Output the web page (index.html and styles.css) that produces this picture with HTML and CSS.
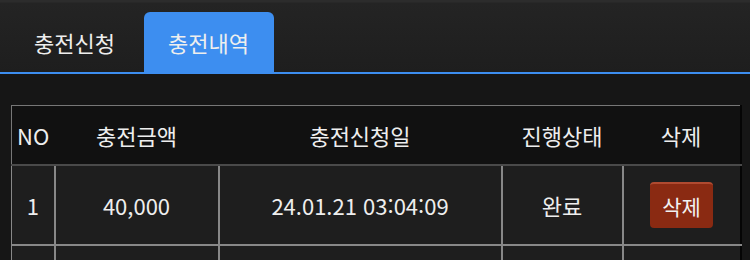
FILE: index.html
```html
<!DOCTYPE html>
<html lang="ko">
<head>
<meta charset="utf-8">
<link rel="stylesheet" href="styles.css">
</head>
<body>
<div class="tabs">
  <div class="tab">충전신청</div>
  <div class="tab active">충전내역</div>
</div>
<div class="content">
  <table class="list">
    <colgroup>
      <col class="c-no"><col class="c-amt"><col class="c-date"><col class="c-state"><col class="c-del">
    </colgroup>
    <thead>
      <tr><th>NO</th><th>충전금액</th><th>충전신청일</th><th>진행상태</th><th>삭제</th></tr>
    </thead>
    <tbody>
      <tr><td>1</td><td>40,000</td><td>24.01.21 03:04:09</td><td>완료</td><td><span class="btn-del">삭제</span></td></tr>
      <tr class="next"><td></td><td></td><td></td><td></td><td></td></tr>
    </tbody>
  </table>
</div>
</body>
</html>
```
FILE: styles.css
```css
html, body {
  margin: 0;
  padding: 0;
  background: #161616;
  font-family: "Noto Sans CJK KR", "Noto Sans", sans-serif;
  color: #eee;
  overflow: hidden;
}
.tabs {
  display: flex;
  align-items: flex-end;
  height: 72px;
  padding-left: 12px;
  background: linear-gradient(to bottom, #2c2c2c 0, #2c2c2c 2px, #242424 3px, #1e1e1e 72px);
  border-bottom: 2px solid #3d8ef0;
}
.tab {
  height: 60px;
  padding: 0 23px 0 22px;
  display: flex;
  align-items: center;
  font-size: 22px;
  color: #eee;
  border-radius: 6px 6px 0 0;
  margin-right: 6px;
}
.tab.active {
  background: #3d8ef0;
  padding: 0 25px 0 24px;
}
.content {
  padding: 31px 10px 0 11px;
  background: #161616;
}
.list {
  width: 729px;
  border-collapse: collapse;
  table-layout: fixed;
  font-size: 22px;
  border-right: 2px solid #050505;
}
.c-no { width: 43px; }
.c-amt { width: 164px; }
.c-date { width: 283px; }
.c-state { width: 121px; }
.c-del { width: 118px; }
thead th {
  background: #111;
  font-weight: normal;
  height: 58px;
  text-align: center;
  border-top: 1px solid #777;
  border-bottom: 2px solid #4a4a4a;
  padding: 0;
}
thead th:first-child {
  border-left: 1px solid #777;
  text-align: left;
  padding-left: 5px;
}
tbody td {
  background: #1e1e1e;
  height: 78px;
  text-align: center;
  padding: 0;
  border-left: 2px solid #888;
  border-bottom: 2px solid #888;
}
tbody td:first-child {
  border-left: 1px solid #888;
}
.btn-del {
  display: inline-block;
  width: 63px;
  height: 46px;
  line-height: 44px;
  box-sizing: border-box;
  background: #8a2a12;
  border-top: 2px solid #b04a30;
  border-radius: 4px;
  color: #f2f2f2;
  font-size: 21px;
  vertical-align: middle;
}
```
